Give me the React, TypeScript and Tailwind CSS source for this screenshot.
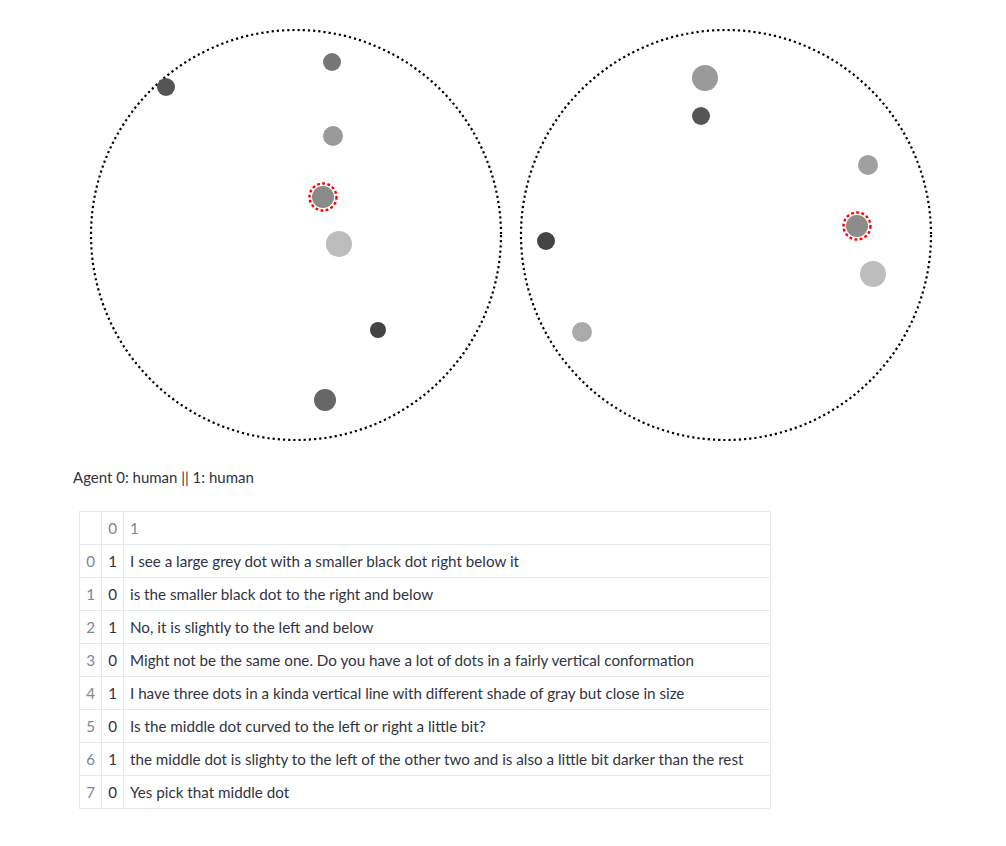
import React from "react";

type Dot = { x: number; y: number; r: number; fill: string; picked?: boolean };

// positions lues sur la capture (coordonnées page)
const leftDots: Dot[] = [
  { x: 166, y: 87, r: 9, fill: "#555555" },
  { x: 332, y: 62, r: 9, fill: "#777777" },
  { x: 333, y: 136, r: 10, fill: "#9a9a9a" },
  { x: 323, y: 197, r: 11, fill: "#8a8a8a", picked: true },
  { x: 339, y: 244, r: 13, fill: "#bcbcbc" },
  { x: 378, y: 330, r: 8, fill: "#444444" },
  { x: 325, y: 400, r: 11, fill: "#666666" },
];

const rightDots: Dot[] = [
  { x: 705, y: 78, r: 13, fill: "#9a9a9a" },
  { x: 701, y: 116, r: 9, fill: "#555555" },
  { x: 868, y: 165, r: 10, fill: "#a0a0a0" },
  { x: 857, y: 226, r: 11, fill: "#8c8c8c", picked: true },
  { x: 873, y: 274, r: 13, fill: "#bdbdbd" },
  { x: 546, y: 241, r: 9, fill: "#444444" },
  { x: 582, y: 332, r: 10, fill: "#aaaaaa" },
];

const rows: [number, number, string][] = [
  [0, 1, "I see a large grey dot with a smaller black dot right below it"],
  [1, 0, "is the smaller black dot to the right and below"],
  [2, 1, "No, it is slightly to the left and below"],
  [3, 0, "Might not be the same one. Do you have a lot of dots in a fairly vertical conformation"],
  [4, 1, "I have three dots in a kinda vertical line with different shade of gray but close in size"],
  [5, 0, "Is the middle dot curved to the left or right a little bit?"],
  [6, 1, "the middle dot is slighty to the left of the other two and is also a little bit darker than the rest"],
  [7, 0, "Yes pick that middle dot"],
];

function Board() {
  const all = [...leftDots, ...rightDots];
  return (
    <svg width={1006} height={458} className="block">
      <circle cx={296} cy={235} r={205} fill="none" stroke="#000" strokeWidth={2.2} strokeDasharray="2.2 3" />
      <circle cx={726} cy={235} r={205} fill="none" stroke="#000" strokeWidth={2.2} strokeDasharray="2.2 3" />
      {all.map((d, i) => (
        <g key={i}>
          <circle cx={d.x} cy={d.y} r={d.r} fill={d.fill} />
          {d.picked && (
            <circle cx={d.x} cy={d.y} r={d.r + 2.5} fill="none" stroke="#ff0000" strokeWidth={2.4} strokeDasharray="2.8 2.4" />
          )}
        </g>
      ))}
    </svg>
  );
}

export default function App() {
  return (
    <div className="min-h-[846px] w-[1006px] bg-white text-[#31333f]" style={{ fontFamily: "Lato, 'Noto Sans', sans-serif" }}>
      <Board />
      <p className="pl-[73px] text-[15px] leading-[24px] mt-[7px]">Agent 0: human || 1: human</p>

      <div className="ml-[79px] mt-[22px] w-[692px] border border-[#e6e9ef] text-[15.2px]">
        <div className="flex h-[32px] items-center">
          <div className="w-[22px] h-full border-r border-[#e6e9ef]" />
          <div className="w-[22px] h-full flex items-center justify-end pr-[6px] border-r border-[#e6e9ef] text-[#808495]">0</div>
          <div className="flex-1 pl-[6px] text-[#808495]">1</div>
        </div>
        {rows.map(([i, a, msg]) => (
          <div key={i} className="flex h-[33px] items-center border-t border-[#e6e9ef]">
            <div className="w-[22px] h-full flex items-center justify-end pr-[6px] border-r border-[#e6e9ef] text-[#808495]">{i}</div>
            <div className="w-[22px] h-full flex items-center justify-end pr-[6px] border-r border-[#e6e9ef]">{a}</div>
            <div className="flex-1 pl-[6px] whitespace-nowrap">{msg}</div>
          </div>
        ))}
      </div>
    </div>
  );
}
